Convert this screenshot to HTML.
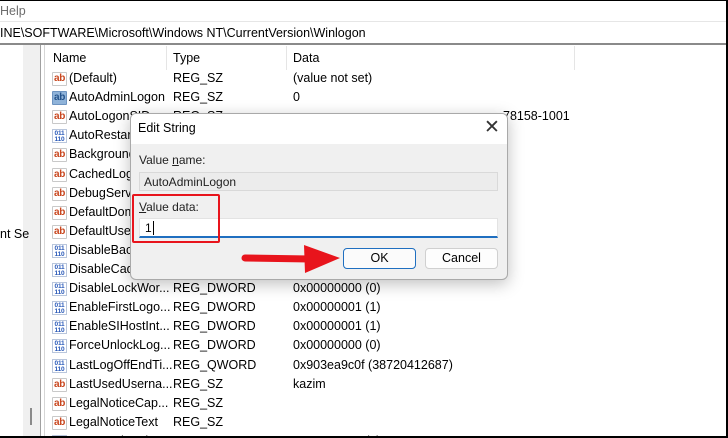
<!DOCTYPE html>
<html style="overflow:hidden;width:728px;height:438px"><head><meta charset="utf-8"><style>
*{margin:0;padding:0;box-sizing:border-box}
body{width:728px;height:438px;overflow:hidden;background:#fff;font-family:"Liberation Sans",sans-serif;font-size:12.5px;color:#000;position:relative}
.a{position:absolute;white-space:nowrap}
.ab{position:absolute;width:15px;height:14px;border:1px solid #c9c9c9;border-radius:1px;background:#fff;color:#c8461e;font-size:10px;font-weight:bold;line-height:11px;text-align:center;letter-spacing:-.3px}
.ab.sel{background:#8fb3d9;color:#24528a;border-color:#6d93c0}
.bi{position:absolute;width:15px;height:14px;border:1px solid #b9c6dc;background:#fff;color:#2858b8;font-size:6.5px;font-weight:bold;line-height:6px;text-align:center;padding-top:1px;letter-spacing:-.2px}
</style></head><body>
<div class="a" style="left:0;top:0;width:728px;height:1px;background:#000"></div>
<div class="a" style="left:0;top:4px;color:#6d6d6d;font-size:12.5px">Help</div>
<div class="a" style="left:0;top:21px;width:726px;height:1px;background:#e6e6e6"></div>
<div class="a" style="left:0;top:26px;font-size:12.5px">INE\SOFTWARE\Microsoft\Windows NT\CurrentVersion\Winlogon</div>
<div class="a" style="left:0;top:43px;width:726px;height:2px;background:#8a8a8a"></div>
<div class="a" style="left:23px;top:45px;width:17px;height:391px;background:#f0f0f0"></div>
<div class="a" style="left:40px;top:45px;width:1px;height:391px;background:#a0a0a0"></div>
<div class="a" style="left:44px;top:45px;width:1px;height:391px;background:#d6d6d6"></div>
<div class="a" style="left:0;top:227px">nt Se</div>
<div class="a" style="left:30px;top:408px;width:2px;height:17px;background:#8a8a8a"></div>
<div class="a" style="left:53px;top:51px">Name</div>
<div class="a" style="left:173px;top:51px">Type</div>
<div class="a" style="left:293px;top:51px">Data</div>
<div class="a" style="left:166px;top:46px;width:1px;height:24px;background:#e5e5e5"></div>
<div class="a" style="left:286px;top:46px;width:1px;height:24px;background:#e5e5e5"></div>
<div class="a" style="left:574px;top:46px;width:1px;height:24px;background:#e5e5e5"></div>
<div id="rows" class="a" style="left:0;top:0;width:726px;height:436px;overflow:hidden"></div>
<script>
var r=[["a","(Default)","REG_SZ","(value not set)"],["s","AutoAdminLogon","REG_SZ","0"],["a","AutoLogonSID","REG_SZ",""],["b","AutoRestartShell","",""],["a","BackgroundContrast","",""],["a","CachedLogonsCount","",""],["a","DebugServerCommand","",""],["a","DefaultDomainName","",""],["a","DefaultUserName","",""],["b","DisableBackButton","",""],["b","DisableCad","",""],["b","DisableLockWor...","REG_DWORD","0x00000000 (0)"],["b","EnableFirstLogo...","REG_DWORD","0x00000001 (1)"],["b","EnableSIHostInt...","REG_DWORD","0x00000001 (1)"],["b","ForceUnlockLog...","REG_DWORD","0x00000000 (0)"],["b","LastLogOffEndTi...","REG_QWORD","0x903ea9c0f (38720412687)"],["a","LastUsedUserna...","REG_SZ","kazim"],["a","LegalNoticeCap...","REG_SZ",""],["a","LegalNoticeText","REG_SZ",""],["b","PasswordExpiry","REG_DWORD","0x00000005 (5)"]];
var h="";
r.forEach(function(x,i){var y=71+i*19.1;
if(x[0]=="b")h+='<div class="bi" style="left:52px;top:'+(y+1)+'px">011<br>110</div>';
else h+='<div class="ab'+(x[0]=="s"?" sel":"")+'" style="left:52px;top:'+(y+1)+'px">ab</div>';
h+='<div class="a" style="left:69px;top:'+y+'px">'+x[1]+'</div><div class="a" style="left:173px;top:'+y+'px">'+x[2]+'</div><div class="a" style="left:293px;top:'+y+'px">'+x[3]+'</div>';});
document.getElementById("rows").innerHTML=h;
</script>
<div class="a" style="left:503px;top:109px">78158-1001</div>
<div class="a" style="left:726px;top:0;width:2px;height:438px;background:#000"></div>
<div class="a" style="left:0;top:436px;width:728px;height:2px;background:#000"></div>
<div class="a" style="left:130px;top:113px;width:378px;height:167px;background:#f0f0f0;border:1px solid #a9a9a9;border-radius:6px;box-shadow:0 4px 16px rgba(0,0,0,.25);overflow:hidden">
 <div class="a" style="left:0;top:0;width:376px;height:30px;background:#fff"></div>
 <div class="a" style="left:7px;top:7px">Edit String</div>
 <div class="a" style="left:353px;top:2px;font-size:19px;color:#333">✕</div>
 <div class="a" style="left:8px;top:39px;color:#222;font-size:12px">Value <u>n</u>ame:</div>
 <div class="a" style="left:8px;top:58px;width:359px;height:19px;background:#ececec;border:1px solid #d9d9d9;padding:2px 0 0 4px;font-size:12px;color:#222">AutoAdminLogon</div>
 <div class="a" style="left:8px;top:86px;color:#222;font-size:12px"><u>V</u>alue data:</div>
 <div class="a" style="left:8px;top:104px;width:359px;height:20px;background:#fff;border:1px solid #e3e3e3;border-bottom:2px solid #1f6fc0;padding:2px 0 0 5px;font-size:12px">1<span style="border-left:1px solid #000;margin-left:1px"></span></div>
 <div class="a" style="left:212px;top:134px;width:73px;height:21px;background:#fbfbfb;border:1px solid #1f6fc0;border-radius:4px;text-align:center;line-height:19px">OK</div>
 <div class="a" style="left:294px;top:134px;width:73px;height:21px;background:#fdfdfd;border:1px solid #d0d0d0;border-radius:4px;text-align:center;line-height:19px">Cancel</div>
</div>
<div class="a" style="left:132px;top:194px;width:88px;height:49px;border:2px solid #e8141c;border-radius:2px"></div>
<svg class="a" style="left:240px;top:240px" width="102" height="36"><path d="M5 18 L70 19" stroke="#e8141c" stroke-width="7" stroke-linecap="round"/><path d="M64 5 L100 18 L65 33 Z" fill="#e8141c"/></svg>
</body></html>
